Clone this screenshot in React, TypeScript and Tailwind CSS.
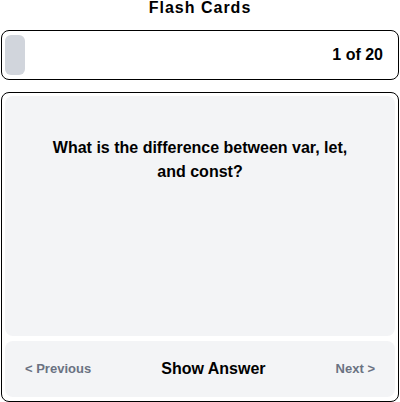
import React, { useState } from 'react';

const cards = [
  { q: 'What is the difference between var, let, and const?', a: 'var is function-scoped, let and const are block-scoped; const cannot be reassigned.' },
];

const App = () => {
  const [index] = useState(0);
  const [showAnswer, setShowAnswer] = useState(false);
  const total = 20;
  const card = cards[index];

  return (
    <div className="w-[400px] h-[402px] overflow-hidden bg-white px-px font-['Liberation_Sans',Arial,sans-serif] text-black">
      <h1 className="h-[18px] text-center text-[16px] leading-[16px] font-bold tracking-[1px]">Flash Cards</h1>

      <div className="mt-3 rounded-lg border border-black px-[3px] py-1">
        <div className="relative h-10">
          <div className="h-full rounded-md bg-gray-300" style={{ width: `${((index + 1) / total) * 100}%` }} />
          <span className="absolute right-[12px] top-0 flex h-full items-center text-[16px] font-bold">
            {index + 1} of {total}
          </span>
        </div>
      </div>

      <div className="mt-3 h-[310px] rounded-lg border border-black p-[3px]">
        <div className="h-[240px] rounded-lg bg-gray-100 px-10 pt-10 text-center text-[16px] leading-6 font-bold">
          {showAnswer ? card.a : card.q}
        </div>
        <div className="mt-[5px] flex h-14 items-center justify-between rounded-lg bg-gray-100 px-5">
          <button className="text-[13px] font-bold text-gray-500">&lt; Previous</button>
          <button onClick={() => setShowAnswer(!showAnswer)} className="text-[16px] font-bold text-black">
            {showAnswer ? 'Hide Answer' : 'Show Answer'}
          </button>
          <button className="text-[13px] font-bold text-gray-500">Next &gt;</button>
        </div>
      </div>
    </div>
  );
};

export default App;
